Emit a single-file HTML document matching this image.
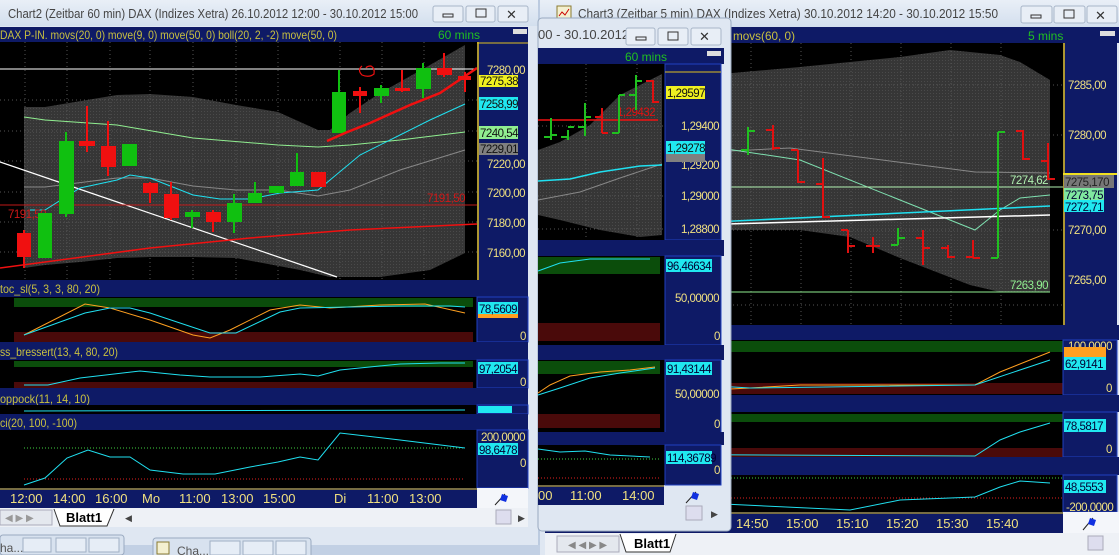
<!DOCTYPE html>
<html><head><meta charset="utf-8"><style>
html,body{margin:0;padding:0;background:#c5d3e6;overflow:hidden}
svg{display:block}
text{font-family:"Liberation Sans",sans-serif}
.a{font-size:11.5px;letter-spacing:-0.5px}
</style></head><body>
<svg width="1119" height="555" viewBox="0 0 1119 555" xmlns="http://www.w3.org/2000/svg">
<defs>
<linearGradient id="tb" x1="0" y1="0" x2="0" y2="1"><stop offset="0" stop-color="#e9eff7"/><stop offset="1" stop-color="#d3dfee"/></linearGradient>
<pattern id="dot" width="3" height="3" patternUnits="userSpaceOnUse"><rect width="3" height="3" fill="#363636"/><rect width="1" height="1" fill="#4a4a4a"/></pattern>
</defs>
<rect width="1119" height="555" fill="#bccbe0"/>

<!-- ============ CHART3 (right) ============ -->
<g>
<rect x="540" y="0" width="579" height="555" fill="#dfe7f2"/>
<rect x="540" y="0" width="579" height="27" fill="url(#tb)"/>
<rect x="557" y="6" width="14" height="14" fill="#f4f0d0" stroke="#8a7a30"/><path d="M559 16 l3 -4 l3 3 l4 -6" stroke="#c00" fill="none"/>
<text x="578" y="18" font-size="13" fill="#444" textLength="420" lengthAdjust="spacingAndGlyphs">Chart3 (Zeitbar 5 min)  DAX (Indizes Xetra) 30.10.2012 14:20 - 30.10.2012 15:50</text>
<rect x="1021" y="6" width="31" height="17" rx="2" fill="#e8eef6" stroke="#a8b6c8"/><rect x="1031" y="15" width="10" height="3" fill="none" stroke="#333"/>
<rect x="1054" y="6" width="31" height="17" rx="2" fill="#e8eef6" stroke="#a8b6c8"/><rect x="1064" y="10" width="10" height="8" fill="none" stroke="#333"/>
<rect x="1087" y="6" width="30" height="17" rx="2" fill="#e8eef6" stroke="#a8b6c8"/><text x="1095" y="20" font-size="13" fill="#333">✕</text>
<rect x="545" y="27" width="574" height="16" fill="#0e1a66"/>
<text x="733" y="40" font-size="12" fill="#c8c040" textLength="62" lengthAdjust="spacingAndGlyphs">movs(60, 0)</text>
<text x="1028" y="40" font-size="12" fill="#20c020">5 mins</text>
<rect x="1100" y="31" width="15" height="5" fill="#ddd"/>
<rect x="545" y="43" width="518" height="282" fill="#000"/>
<polygon points="545,48 710,75 800,67 900,57 950,50 1000,55 1020,62 1050,80 1050,292 1000,292 970,285 900,258 850,237 800,230 545,230" fill="url(#dot)"/>
<g stroke="#555" stroke-dasharray="1,3">
<line x1="751" y1="43" x2="751" y2="325"/><line x1="801" y1="43" x2="801" y2="325"/><line x1="851" y1="43" x2="851" y2="325"/><line x1="901" y1="43" x2="901" y2="325"/><line x1="951" y1="43" x2="951" y2="325"/><line x1="1001" y1="43" x2="1001" y2="325"/>
<line x1="545" y1="85" x2="1063" y2="85"/><line x1="545" y1="135" x2="1063" y2="135"/><line x1="545" y1="230" x2="1063" y2="230"/><line x1="545" y1="305" x2="1063" y2="305"/>
</g>
<polyline points="545,160 790,148 975,172 1050,173" stroke="#888" fill="none"/>
<polyline points="545,142 700,145 800,160 900,200 975,230 1000,210 1020,198 1050,195" stroke="#7fe0b0" fill="none"/>
<line x1="545" y1="187" x2="1063" y2="187" stroke="#b0f0b0"/>
<polyline points="545,229 1050,215" stroke="#fff" stroke-width="1.5" fill="none"/>
<polyline points="545,230 1050,206" stroke="#20e0f0" stroke-width="1.5" fill="none"/>
<line x1="730" y1="292" x2="1050" y2="292" stroke="#90ee90"/>
<text x="1010" y="184" class="a" fill="#b0f0b0">7274,62</text>
<text x="1010" y="289" class="a" fill="#90ee90">7263,90</text>
<g stroke-width="2" fill="none">
<path d="M748 127 V155 M741 150 H748 M748 131 H755" stroke="#20c020"/>
<path d="M773 125 V150 M766 130 H773 M773 148 H780" stroke="#e01010"/>
<path d="M798 150 V183 M791 150 H798 M798 182 H805" stroke="#e01010"/>
<path d="M823 158 V218 M816 184 H823 M823 217 H830" stroke="#e01010"/>
<path d="M848 230 V253 M841 230 H848 M848 246 H855" stroke="#e01010"/>
<path d="M873 237 V253 M866 246 H873 M873 246 H880" stroke="#e01010"/>
<path d="M898 228 V245 M891 245 H898 M898 238 H905" stroke="#20c020"/>
<path d="M923 230 V265 M916 238 H923 M923 248 H930" stroke="#e01010"/>
<path d="M948 245 V258 M941 248 H948 M948 257 H955" stroke="#e01010"/>
<path d="M973 240 V258 M966 257 H973 M973 258 H980" stroke="#e01010"/>
<path d="M998 132 V258 M991 258 H998 M998 132 H1005" stroke="#20c020"/>
<path d="M1023 130 V160 M1016 131 H1023 M1023 159 H1030" stroke="#e01010"/>
<path d="M1048 143 V180 M1041 161 H1048 M1048 179 H1055" stroke="#e01010"/>
</g>
<rect x="1063" y="43" width="54" height="282" fill="#0e1a66"/>
<line x1="1064" y1="43" x2="1064" y2="325" stroke="#e0c020" stroke-width="1.5"/>
<g class="a" fill="#f0e080"><text x="1068" y="89">7285,00</text><text x="1068" y="139">7280,00</text><text x="1068" y="234">7270,00</text><text x="1068" y="284">7265,00</text></g>
<rect x="1063" y="173" width="54" height="2" fill="#f0e020"/>
<rect x="1064" y="175" width="50" height="13" fill="#777"/><text x="1065" y="186" class="a" fill="#222">7275,170</text>
<rect x="1064" y="188" width="40" height="12" fill="#80e8a0"/><text x="1065" y="199" class="a" fill="#003">7273,75</text>
<rect x="1064" y="200" width="40" height="12" fill="#20e8f0"/><text x="1065" y="211" class="a" fill="#003">7272,71</text>
<rect x="545" y="325" width="574" height="15" fill="#0e1a66"/>
<rect x="545" y="340" width="518" height="55" fill="#000"/>
<rect x="545" y="341" width="518" height="11" fill="#0b4d0b"/><rect x="545" y="383" width="518" height="11" fill="#4a0a0a"/>
<polyline points="545,378 580,370 600,368 640,372 680,388 710,390 750,388 800,385 975,385 1000,372 1050,352" stroke="#ffa020" fill="none"/>
<polyline points="545,378 600,373 650,373 700,385 750,388 975,385 1050,360" stroke="#20e0f0" fill="none"/>
<rect x="1063" y="340" width="54" height="55" fill="#0e1a66" stroke="#2040c0"/>
<text x="1068" y="350" class="a" fill="#f0e080">100,0000</text>
<rect x="1064" y="347" width="42" height="10" fill="#ffa020"/><rect x="1064" y="357" width="42" height="13" fill="#20e8f0"/><text x="1065" y="368" class="a" fill="#003">62,9141</text>
<text x="1106" y="392" class="a" fill="#f0e080">0</text>
<rect x="545" y="395" width="574" height="17" fill="#0e1a66"/>
<rect x="545" y="412" width="518" height="45" fill="#000"/>
<rect x="545" y="414" width="518" height="8" fill="#0b4d0b"/><rect x="545" y="448" width="518" height="9" fill="#4a0a0a"/>
<polyline points="545,454 975,456 1000,440 1020,432 1050,423" stroke="#20e0f0" fill="none"/>
<rect x="1063" y="412" width="54" height="45" fill="#0e1a66" stroke="#2040c0"/>
<rect x="1064" y="419" width="42" height="13" fill="#20e8f0"/><text x="1065" y="430" class="a" fill="#003">78,5817</text>
<text x="1106" y="453" class="a" fill="#f0e080">0</text>
<rect x="545" y="457" width="574" height="18" fill="#0e1a66"/>
<rect x="545" y="475" width="518" height="37" fill="#000"/>
<line x1="545" y1="478" x2="1063" y2="478" stroke="#40d040" stroke-dasharray="1,2"/>
<line x1="545" y1="498" x2="1063" y2="498" stroke="#e02020" stroke-dasharray="1,2"/>
<polyline points="545,490 600,490 660,501 850,510 900,500 975,497 1000,487 1020,481 1050,483" stroke="#20e0f0" fill="none"/>
<rect x="1063" y="475" width="54" height="37" fill="#0e1a66" stroke="#2040c0"/>
<rect x="1064" y="480" width="42" height="13" fill="#20e8f0"/><text x="1065" y="491" class="a" fill="#003">48,5553</text>
<text x="1066" y="511" class="a" fill="#f0e080">-200,0000</text>
<rect x="545" y="512" width="518" height="21" fill="#0e1a66"/><line x1="545" y1="513" x2="1063" y2="513" stroke="#e0c020"/>
<g font-size="13" fill="#f0e080"><text x="736" y="528">14:50</text><text x="786" y="528">15:00</text><text x="836" y="528">15:10</text><text x="886" y="528">15:20</text><text x="936" y="528">15:30</text><text x="986" y="528">15:40</text></g>
<rect x="1063" y="512" width="56" height="21" fill="#f4f6fa"/>
<path d="M1083 530 L1093 518" stroke="#222"/><path d="M1090 518 l6 2 l-2 6 l-6 -2z" fill="#1030e0"/>
<rect x="545" y="533" width="574" height="22" fill="#eef1f6"/>
<rect x="557" y="536" width="62" height="16" fill="#e4e8ee" stroke="#aab"/>
<text x="568" y="548" font-size="10" fill="#888">◀ ◀ ▶ ▶</text>
<path d="M620 534 L626 552 H670 L676 534" fill="#fff" stroke="#333"/>
<text x="634" y="548" font-size="13" font-weight="bold" fill="#000">Blatt1</text>
<rect x="1088" y="536" width="15" height="14" fill="#dde" stroke="#aab"/>
</g>

<!-- ============ LEFT (Chart2) ============ -->
<g>
<rect x="0" y="0" width="538" height="545" fill="#dfe7f2"/>
<rect x="0" y="0" width="538" height="26" fill="url(#tb)"/>
<text x="8" y="18" font-size="13" fill="#444" textLength="410" lengthAdjust="spacingAndGlyphs">Chart2 (Zeitbar 60 min)  DAX (Indizes Xetra) 26.10.2012 12:00 - 30.10.2012 15:00</text>
<rect x="433" y="6" width="30" height="16" rx="2" fill="#e8eef6" stroke="#a8b6c8"/><rect x="443" y="14" width="10" height="3" fill="none" stroke="#333"/>
<rect x="466" y="6" width="29" height="16" rx="2" fill="#e8eef6" stroke="#a8b6c8"/><rect x="476" y="9" width="10" height="8" fill="none" stroke="#333"/>
<rect x="498" y="6" width="30" height="16" rx="2" fill="#e8eef6" stroke="#a8b6c8"/><text x="506" y="19" font-size="13" fill="#333">✕</text>
<rect x="0" y="27" width="528" height="15" fill="#0e1a66"/>
<text x="0" y="39" font-size="12" fill="#c8c040" textLength="337" lengthAdjust="spacingAndGlyphs">DAX P-IN. movs(20, 0) move(9, 0) move(50, 0) boll(20, 2, -2) move(50, 0)</text>
<text x="438" y="39" font-size="12" fill="#20c020">60 mins</text>
<rect x="513" y="29" width="14" height="5" fill="#ddd"/>
<rect x="0" y="42" width="477" height="238" fill="#000"/>
<polygon points="24,107 45,107 117,95 150,94 193,97 236,105 278,112 318,130 330,130 350,113 380,93 430,65 465,45 465,253 430,270 380,277 330,277 300,270 236,258 193,257 150,257 117,258 80,262 45,265 24,268" fill="url(#dot)"/>
<g stroke="#555" stroke-dasharray="1,3">
<line x1="25" y1="42" x2="25" y2="280"/><line x1="67" y1="42" x2="67" y2="280"/><line x1="110" y1="42" x2="110" y2="280"/><line x1="150" y1="42" x2="150" y2="280"/><line x1="193" y1="42" x2="193" y2="280"/><line x1="236" y1="42" x2="236" y2="280"/><line x1="278" y1="42" x2="278" y2="280"/><line x1="340" y1="42" x2="340" y2="280"/><line x1="382" y1="42" x2="382" y2="280"/><line x1="424" y1="42" x2="424" y2="280"/>
<line x1="0" y1="100" x2="477" y2="100"/><line x1="0" y1="131" x2="477" y2="131"/><line x1="0" y1="161" x2="477" y2="161"/><line x1="0" y1="192" x2="477" y2="192"/><line x1="0" y1="222" x2="477" y2="222"/><line x1="0" y1="252" x2="477" y2="252"/>
</g>
<polyline points="24,117 45,120 117,125 193,138 278,145 318,147 350,145 400,140 465,132" stroke="#90ee90" fill="none"/>
<polyline points="24,187 45,187 117,178 150,178 193,186 236,190 278,190 318,196 350,190 400,170 465,150" stroke="#888" fill="none"/>
<line x1="0" y1="162" x2="337" y2="277" stroke="#fff" stroke-width="1.2"/>
<line x1="0" y1="69" x2="477" y2="69" stroke="#fff"/>
<line x1="0" y1="205" x2="477" y2="205" stroke="#c01818"/>
<polyline points="0,268 150,248 250,238 350,230 477,224" stroke="#f01010" stroke-width="1.5" fill="none"/>
<polyline points="30,210 45,210 80,188 117,180 130,175 150,178 193,195 220,199 250,199 280,193 318,190 330,180 360,155 400,135 430,120 465,104" stroke="#20e0f0" fill="none"/>
<text x="8" y="218" class="a" fill="#d01818">7191,50</text><text x="427" y="202" class="a" fill="#d01818">7191,50</text>
<g>
<line x1="24" y1="230" x2="24" y2="268" stroke="#f01010" stroke-width="2"/><rect x="17" y="233" width="14" height="24" fill="#f01010"/>
<rect x="38" y="213" width="14" height="45" fill="#10c010"/>
<line x1="66" y1="132" x2="66" y2="217" stroke="#10c010" stroke-width="2"/><rect x="59" y="141" width="15" height="73" fill="#10c010"/>
<line x1="87" y1="106" x2="87" y2="152" stroke="#f01010" stroke-width="2"/><rect x="79" y="141" width="16" height="5" fill="#f01010"/>
<line x1="108" y1="121" x2="108" y2="176" stroke="#f01010" stroke-width="2"/><rect x="101" y="146" width="15" height="21" fill="#f01010"/>
<rect x="122" y="144" width="15" height="22" fill="#10c010"/>
<line x1="150" y1="182" x2="150" y2="203" stroke="#f01010" stroke-width="2"/><rect x="143" y="183" width="15" height="10" fill="#f01010"/>
<line x1="171" y1="182" x2="171" y2="220" stroke="#f01010" stroke-width="2"/><rect x="164" y="194" width="15" height="24" fill="#f01010"/>
<line x1="192" y1="210" x2="192" y2="228" stroke="#10c010" stroke-width="2"/><rect x="185" y="212" width="15" height="5" fill="#10c010"/>
<line x1="213" y1="210" x2="213" y2="232" stroke="#f01010" stroke-width="2"/><rect x="206" y="212" width="15" height="10" fill="#f01010"/>
<line x1="234" y1="194" x2="234" y2="233" stroke="#10c010" stroke-width="2"/><rect x="227" y="203" width="15" height="19" fill="#10c010"/>
<line x1="255" y1="182" x2="255" y2="203" stroke="#10c010" stroke-width="2"/><rect x="248" y="193" width="14" height="10" fill="#10c010"/>
<rect x="269" y="186" width="15" height="7" fill="#10c010"/>
<line x1="297" y1="153" x2="297" y2="186" stroke="#10c010" stroke-width="2"/><rect x="290" y="172" width="14" height="14" fill="#10c010"/>
<rect x="311" y="172" width="15" height="15" fill="#f01010"/>
<line x1="339" y1="70" x2="339" y2="133" stroke="#10c010" stroke-width="2"/><rect x="332" y="92" width="14" height="41" fill="#10c010"/>
<line x1="360" y1="87" x2="360" y2="113" stroke="#f01010" stroke-width="2"/><rect x="353" y="91" width="14" height="5" fill="#f01010"/>
<line x1="381" y1="85" x2="381" y2="103" stroke="#10c010" stroke-width="2"/><rect x="374" y="88" width="15" height="8" fill="#10c010"/>
<line x1="402" y1="70" x2="402" y2="92" stroke="#f01010" stroke-width="2"/><rect x="395" y="88" width="15" height="3" fill="#f01010"/>
<line x1="423" y1="63" x2="423" y2="98" stroke="#10c010" stroke-width="2"/><rect x="416" y="68" width="15" height="21" fill="#10c010"/>
<line x1="444" y1="53" x2="444" y2="77" stroke="#f01010" stroke-width="2"/><rect x="437" y="68" width="15" height="7" fill="#f01010"/>
<line x1="465" y1="72" x2="465" y2="92" stroke="#f01010" stroke-width="2"/><rect x="458" y="76" width="13" height="4" fill="#f01010"/>
</g>
<polyline points="327,141 345,133 370,123 410,105 440,93 477,68" stroke="#f01010" stroke-width="2.5" fill="none"/>
<path d="M362 66 q-5 4 0 9 q7 3 12 -1 q1 -6 -3 -8 q-4 0 -5 2" stroke="#f01010" stroke-width="1.2" fill="none"/>
<rect x="477" y="42" width="51" height="238" fill="#0e1a66"/>
<line x1="478" y1="42" x2="478" y2="280" stroke="#e0c020" stroke-width="1.5"/>
<line x1="477" y1="43" x2="528" y2="43" stroke="#e0c020"/>
<g class="a" fill="#f0e080"><text x="487" y="74">7280,00</text><text x="487" y="168">7220,00</text><text x="487" y="197">7200,00</text><text x="487" y="227">7180,00</text><text x="487" y="257">7160,00</text></g>
<rect x="479" y="75" width="39" height="12" fill="#f0f020"/><text x="480" y="85" class="a" fill="#111">7275,38</text>
<rect x="479" y="97" width="39" height="13" fill="#20e8f0"/><text x="480" y="108" class="a" fill="#111">7258,99</text>
<rect x="479" y="126" width="39" height="13" fill="#90ee90"/><text x="480" y="137" class="a" fill="#111">7240,54</text>
<rect x="479" y="143" width="39" height="12" fill="#808080"/><text x="480" y="153" class="a" fill="#111">7229,01</text>
<rect x="0" y="280" width="528" height="17" fill="#0e1a66"/>
<text x="0" y="293" font-size="12" fill="#c8c040" textLength="100" lengthAdjust="spacingAndGlyphs">toc_sl(5, 3, 3, 80, 20)</text>
<rect x="0" y="297" width="477" height="45" fill="#000"/>
<rect x="14" y="298" width="459" height="9" fill="#0b4d0b"/><rect x="14" y="332" width="459" height="10" fill="#4a0a0a"/>
<polyline points="24,335 85,304 110,308 150,320 193,335 210,338 230,330 270,310 300,305 330,308 380,305 425,304 465,313" stroke="#ffa020" fill="none"/>
<polyline points="24,335 85,313 110,308 130,308 150,313 210,333 236,333 280,312 300,308 400,306 450,306 465,307" stroke="#20e0f0" fill="none"/>
<rect x="477" y="297" width="51" height="45" fill="#0e1a66" stroke="#2040c0"/>
<rect x="478" y="302" width="40" height="12" fill="#20e8f0"/><rect x="478" y="314" width="40" height="4" fill="#ffa020"/><text x="479" y="313" class="a" fill="#003">78,5609</text>
<text x="520" y="340" class="a" fill="#f0e080">0</text>
<rect x="0" y="342" width="528" height="18" fill="#0e1a66"/>
<text x="0" y="356" font-size="12" fill="#c8c040" textLength="118" lengthAdjust="spacingAndGlyphs">ss_bressert(13, 4, 80, 20)</text>
<rect x="0" y="360" width="477" height="28" fill="#000"/>
<rect x="14" y="361" width="459" height="6" fill="#0b4d0b"/><rect x="14" y="382" width="459" height="6" fill="#4a0a0a"/>
<polyline points="24,385 48,385 80,378 140,371 180,375 210,377 260,377 300,374 318,376 340,370 400,364 440,363 465,363" stroke="#20e0f0" fill="none"/>
<rect x="477" y="360" width="51" height="28" fill="#0e1a66" stroke="#2040c0"/>
<rect x="478" y="362" width="40" height="12" fill="#20e8f0"/><text x="479" y="373" class="a" fill="#003">97,2054</text>
<text x="520" y="386" class="a" fill="#f0e080">0</text>
<rect x="0" y="388" width="528" height="17" fill="#0e1a66"/>
<text x="0" y="403" font-size="12" fill="#c8c040" textLength="90" lengthAdjust="spacingAndGlyphs">oppock(11, 14, 10)</text>
<rect x="0" y="405" width="477" height="9" fill="#000"/>
<line x1="24" y1="411" x2="465" y2="410" stroke="#20e0f0"/>
<rect x="477" y="405" width="51" height="9" fill="#0e1a66" stroke="#2040c0"/><rect x="478" y="406" width="34" height="7" fill="#20e8f0"/>
<rect x="0" y="414" width="528" height="16" fill="#0e1a66"/>
<text x="0" y="427" font-size="12" fill="#c8c040" textLength="77" lengthAdjust="spacingAndGlyphs">ci(20, 100, -100)</text>
<rect x="0" y="430" width="477" height="58" fill="#000"/>
<line x1="24" y1="448" x2="465" y2="448" stroke="#40d040" stroke-dasharray="1,2"/><line x1="24" y1="479" x2="465" y2="479" stroke="#e02020" stroke-dasharray="1,2"/>
<polyline points="24,485 45,478 67,458 88,450 110,457 130,457 150,470 183,474 215,474 250,467 278,462 300,457 318,460 340,433 400,440 465,448" stroke="#20e0f0" fill="none"/>
<rect x="477" y="430" width="51" height="58" fill="#0e1a66" stroke="#2040c0"/>
<text x="481" y="441" class="a" fill="#f0e080">200,0000</text>
<rect x="478" y="443" width="40" height="12" fill="#20e8f0"/><text x="479" y="454" class="a" fill="#003">98,6478</text>
<text x="520" y="467" class="a" fill="#f0e080">0</text>
<rect x="0" y="488" width="477" height="20" fill="#0e1a66"/><line x1="0" y1="489" x2="477" y2="489" stroke="#e0c020"/>
<g font-size="13" fill="#f0e080"><text x="10" y="503">12:00</text><text x="53" y="503">14:00</text><text x="95" y="503">16:00</text><text x="142" y="503">Mo</text><text x="179" y="503">11:00</text><text x="221" y="503">13:00</text><text x="263" y="503">15:00</text><text x="334" y="503">Di</text><text x="367" y="503">11:00</text><text x="409" y="503">13:00</text></g>
<rect x="477" y="488" width="51" height="20" fill="#f4f6fa"/>
<path d="M495 505 L505 494" stroke="#222"/><path d="M502 494 l6 2 l-2 6 l-6 -2z" fill="#1030e0"/>
<rect x="0" y="508" width="528" height="19" fill="#eef1f6"/>
<rect x="0" y="510" width="52" height="15" fill="#e4e8ee" stroke="#aab"/><text x="5" y="521" font-size="10" fill="#999">◀ ▶ ▶</text>
<path d="M54 509 L60 526 H107 L114 509" fill="#fff" stroke="#333"/>
<text x="66" y="522" font-size="13" font-weight="bold" fill="#000">Blatt1</text>
<text x="125" y="521" font-size="9" fill="#444">◀</text>
<rect x="496" y="510" width="15" height="14" fill="#dde" stroke="#aab"/><text x="518" y="521" font-size="9" fill="#444">▶</text>
</g>
<rect x="0" y="545" width="540" height="10" fill="#c2d0e4"/>
<rect x="0" y="535" width="124" height="20" rx="3" fill="#d8e2ef" stroke="#9aaac0"/>
<text x="0" y="552" font-size="12" fill="#555">ha...</text>
<rect x="23" y="538" width="28" height="14" fill="#e6edf6" stroke="#a0b0c4"/><rect x="56" y="538" width="30" height="14" fill="#e6edf6" stroke="#a0b0c4"/><rect x="89" y="538" width="30" height="14" fill="#e6edf6" stroke="#a0b0c4"/>
<rect x="153" y="538" width="158" height="20" rx="3" fill="#d8e2ef" stroke="#9aaac0"/>
<rect x="157" y="542" width="12" height="12" fill="#f4f0d0" stroke="#8a7a30"/>
<text x="177" y="555" font-size="12" fill="#555">Cha...</text>
<rect x="210" y="541" width="30" height="14" fill="#e6edf6" stroke="#a0b0c4"/><rect x="243" y="541" width="30" height="14" fill="#e6edf6" stroke="#a0b0c4"/><rect x="276" y="541" width="30" height="14" fill="#e6edf6" stroke="#a0b0c4"/>

<!-- ============ MIDDLE window ============ -->
<g>
<rect x="538" y="18" width="193" height="513" rx="4" fill="#dfe7f2" stroke="#9aaac0"/>
<text x="538" y="39" font-size="13" fill="#444">00 - 30.10.2012 ...</text>
<rect x="626" y="28" width="29" height="17" rx="2" fill="#e8eef6" stroke="#a8b6c8"/><rect x="636" y="37" width="10" height="3" fill="none" stroke="#333"/>
<rect x="658" y="28" width="30" height="17" rx="2" fill="#e8eef6" stroke="#a8b6c8"/><rect x="668" y="32" width="10" height="8" fill="none" stroke="#333"/>
<rect x="691" y="28" width="30" height="17" rx="2" fill="#e8eef6" stroke="#a8b6c8"/><text x="699" y="41" font-size="13" fill="#333">✕</text>
<rect x="538" y="48" width="186" height="16" fill="#0e1a66"/>
<text x="625" y="61" font-size="12" fill="#20c020">60 mins</text>
<rect x="707" y="51" width="14" height="5" fill="#ddd"/>
<rect x="538" y="64" width="127" height="176" fill="#000"/>
<polygon points="538,150 560,142 590,125 620,95 650,80 662,74 662,235 640,237 600,230 560,220 538,215" fill="url(#dot)"/>
<g stroke="#555" stroke-dasharray="1,3"><line x1="586" y1="64" x2="586" y2="240"/><line x1="637" y1="64" x2="637" y2="240"/><line x1="538" y1="126" x2="665" y2="126"/><line x1="538" y1="196" x2="665" y2="196"/><line x1="538" y1="229" x2="665" y2="229"/></g>
<polyline points="538,200 580,192 620,178 662,164" stroke="#888" fill="none"/>
<polyline points="538,181 570,179 600,172 640,166 662,165" stroke="#20e0f0" stroke-width="1.5" fill="none"/>
<line x1="538" y1="120" x2="658" y2="120" stroke="#f01010" stroke-width="1.5"/>
<text x="617" y="116" class="a" fill="#e01010">1,29432</text>
<g stroke-width="2" fill="none">
<path d="M551 118 V140 M544 137 H551 M551 135 H557" stroke="#20c020"/>
<path d="M568 130 V140 M561 137 H568 M568 127 H574" stroke="#20c020"/>
<path d="M585 103 V136 M578 127 H585 M585 117 H591" stroke="#20c020"/>
<path d="M602 108 V133 M595 117 H602 M602 133 H608" stroke="#e01010"/>
<path d="M619 95 V133 M612 133 H619 M619 95 H625" stroke="#20c020"/>
<path d="M636 75 V110 M629 95 H636 M636 81 H642" stroke="#20c020"/>
<path d="M653 80 V103 M646 81 H653 M653 102 H659" stroke="#e01010"/>
</g>
<rect x="665" y="64" width="56" height="176" fill="#0e1a66" stroke="#2040c0"/>
<line x1="665" y1="72" x2="721" y2="72" stroke="#e0c020"/>
<g class="a" fill="#f0e080"><text x="681" y="130">1,29400</text><text x="681" y="169">1,29200</text><text x="681" y="200">1,29000</text><text x="681" y="233">1,28800</text></g>
<rect x="666" y="86" width="39" height="13" fill="#f0f020"/><text x="667" y="97" class="a" fill="#111">1,29597</text>
<rect x="666" y="141" width="39" height="13" fill="#20e8f0"/><text x="667" y="152" class="a" fill="#111">1,29278</text>
<rect x="666" y="154" width="39" height="8" fill="#808080"/>
<rect x="538" y="240" width="186" height="16" fill="#0e1a66"/>
<rect x="538" y="256" width="127" height="89" fill="#000"/>
<rect x="538" y="257" width="122" height="17" fill="#0b4d0b"/><rect x="538" y="323" width="122" height="18" fill="#4a0a0a"/>
<polyline points="538,271 560,263 590,259 650,259" stroke="#20e0f0" fill="none"/>
<rect x="665" y="256" width="56" height="89" fill="#0e1a66" stroke="#2040c0"/>
<rect x="666" y="259" width="46" height="13" fill="#20e8f0"/><text x="667" y="270" class="a" fill="#003">96,46634</text>
<text x="675" y="302" class="a" fill="#f0e080">50,00000</text><text x="714" y="340" class="a" fill="#f0e080">0</text>
<rect x="538" y="345" width="186" height="15" fill="#0e1a66"/>
<rect x="538" y="360" width="127" height="88" fill="#000"/>
<rect x="538" y="361" width="122" height="13" fill="#0b4d0b"/><rect x="538" y="414" width="122" height="14" fill="#4a0a0a"/>
<polyline points="538,393 550,385 570,376 600,372 630,370 655,367" stroke="#ffa020" fill="none"/>
<polyline points="538,395 560,388 590,378 620,373 655,368" stroke="#20e0f0" fill="none"/>
<rect x="665" y="360" width="56" height="88" fill="#0e1a66" stroke="#2040c0"/>
<rect x="666" y="362" width="46" height="13" fill="#20e8f0"/><text x="667" y="373" class="a" fill="#003">91,43144</text>
<text x="675" y="398" class="a" fill="#f0e080">50,00000</text><text x="714" y="428" class="a" fill="#f0e080">0</text>
<rect x="538" y="432" width="186" height="13" fill="#0e1a66"/>
<rect x="538" y="445" width="127" height="40" fill="#000"/>
<line x1="538" y1="459" x2="660" y2="459" stroke="#40d040" stroke-dasharray="1,2"/><line x1="538" y1="478" x2="660" y2="478" stroke="#e02020" stroke-dasharray="1,2"/>
<polyline points="538,449 560,452 585,451 610,455 650,457" stroke="#20e0f0" fill="none"/>
<rect x="665" y="445" width="56" height="40" fill="#0e1a66" stroke="#2040c0"/>
<rect x="666" y="451" width="46" height="13" fill="#20e8f0"/><text x="667" y="462" class="a" fill="#003">114,36789</text>
<text x="714" y="474" class="a" fill="#f0e080">0</text>
<rect x="538" y="485" width="126" height="20" fill="#0e1a66"/><line x1="538" y1="486" x2="664" y2="486" stroke="#e0c020"/>
<g font-size="13" fill="#f0e080"><text x="538" y="500">00</text><text x="570" y="500">11:00</text><text x="622" y="500">14:00</text></g>
<path d="M686 503 L696 492" stroke="#222"/><path d="M693 492 l6 2 l-2 6 l-6 -2z" fill="#1030e0"/>
<rect x="686" y="506" width="16" height="14" fill="#dde" stroke="#aab"/><text x="711" y="517" font-size="9" fill="#444">▶</text>
</g>
</svg>
</body></html>
